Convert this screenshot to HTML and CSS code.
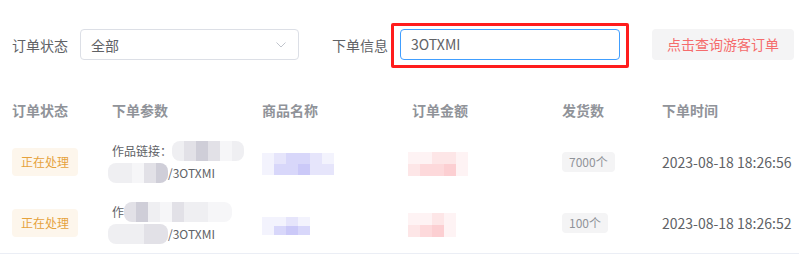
FILE: index.html
```html
<!DOCTYPE html>
<html lang="zh-CN">
<head>
    <meta charset="UTF-8">
    <meta name="viewport" content="width=device-width, initial-scale=1.0">
    <title>游客订单查询</title>
    <link rel="stylesheet" href="styles.css">
</head>
<body>
    <div class="searchBar">
        <span class="formLabel">订单状态</span>
        <div class="selectBox">
            <span>全部</span>
            <svg class="chevron" width="10" height="6" viewBox="0 0 10 6"><path d="M0.5 0.5 L5 5 L9.5 0.5" fill="none" stroke="#c0c4cc" stroke-width="1"/></svg>
        </div>
        <span class="formLabel infoLabel">下单信息</span>
        <div class="inputWrap">
            <div class="textInput">3OTXMI</div>
            <div class="markBox"></div>
        </div>
        <div class="queryButton">点击查询游客订单</div>
    </div>

    <div class="orderTable">
        <div class="tableRow headRow">
            <div class="cell c1">订单状态</div>
            <div class="cell c2">下单参数</div>
            <div class="cell c3">商品名称</div>
            <div class="cell c4">订单金额</div>
            <div class="cell c5">发货数</div>
            <div class="cell c6">下单时间</div>
        </div>

        <div class="tableRow">
            <div class="cell c1"><span class="statusTag">正在处理</span></div>
            <div class="cell c2 params">
                <div class="paramLine">作品链接：<span class="mosaic grey"><i class="a"></i><i class="b"></i><i class="c"></i><i class="b"></i><i class="d"></i><i class="a"></i></span></div>
                <div class="paramLine"><span class="mosaic grey lead"><i class="a"></i><i class="a"></i><i class="d"></i><i class="b"></i><i class="c"></i></span>/3OTXMI</div>
            </div>
            <div class="cell c3">
                <span class="mosaic2 violet">
                    <i class="d"></i><i class="a"></i><i class="b"></i><i class="b"></i><i class="a"></i><i class="d"></i>
                    <i class="d"></i><i class="b"></i><i class="b"></i><i class="c"></i><i class="a"></i><i class="a"></i>
                </span>
            </div>
            <div class="cell c4">
                <span class="mosaic2 pink">
                    <i class="d"></i><i class="d"></i><i class="a"></i><i class="a"></i><i class="d"></i>
                    <i class="a"></i><i class="b"></i><i class="b"></i><i class="c"></i><i class="d"></i>
                </span>
            </div>
            <div class="cell c5"><span class="countTag">7000个</span></div>
            <div class="cell c6 timeText">2023-08-18 18:26:56</div>
        </div>

        <div class="tableRow">
            <div class="cell c1"><span class="statusTag">正在处理</span></div>
            <div class="cell c2 params">
                <div class="paramLine">作<span class="mosaic grey"><i class="b"></i><i class="c"></i><i class="a"></i><i class="d"></i><i class="b"></i><i class="a"></i><i class="a"></i><i class="d"></i><i class="d"></i></span></div>
                <div class="paramLine"><span class="mosaic grey lead"><i class="a"></i><i class="a"></i><i class="a"></i><i class="b"></i><i class="b"></i></span>/3OTXMI</div>
            </div>
            <div class="cell c3">
                <span class="mosaic2 violet small">
                    <i class="d"></i><i class="d"></i><i class="a"></i><i class="d"></i>
                    <i class="d"></i><i class="b"></i><i class="c"></i><i class="b"></i>
                </span>
            </div>
            <div class="cell c4">
                <span class="mosaic2 pink small">
                    <i class="d"></i><i class="d"></i><i class="a"></i><i class="d"></i>
                    <i class="a"></i><i class="b"></i><i class="c"></i><i class="d"></i>
                </span>
            </div>
            <div class="cell c5"><span class="countTag">100个</span></div>
            <div class="cell c6 timeText">2023-08-18 18:26:52</div>
        </div>
    </div>
</body>
</html>
```
FILE: styles.css
```css
body {
    margin: 0;
    background-color: #fff;
    font-family: 'Noto Sans CJK SC', 'Microsoft YaHei', sans-serif;
    font-size: 14px;
    color: #606266;
}

.searchBar {
    display: flex;
    align-items: center;
    padding: 29px 0 0 12px;
    height: 31px;
}

.formLabel {
    color: #606266;
    margin-right: 12px;
}

.infoLabel {
    margin-left: 33px;
    margin-right: 12px;
}

.selectBox {
    box-sizing: border-box;
    width: 219px;
    height: 31px;
    border: 1px solid #dcdfe6;
    border-radius: 4px;
    display: flex;
    align-items: center;
    justify-content: space-between;
    padding: 0 12px 0 10px;
}

.chevron {
    display: block;
}

.inputWrap {
    position: relative;
}

.textInput {
    box-sizing: border-box;
    width: 220px;
    height: 31px;
    border: 1px solid #409eff;
    border-radius: 4px;
    padding: 0 10px;
    line-height: 29px;
    color: #606266;
}

.markBox {
    position: absolute;
    left: -9px;
    top: -6px;
    width: 232px;
    height: 39px;
    border: 3px solid #ff1c1c;
    border-radius: 2px;
}

.queryButton {
    margin-left: 32px;
    height: 31px;
    line-height: 31px;
    padding: 0 15px;
    background-color: #f4f4f5;
    border-radius: 4px;
    color: #f56c6c;
}

.orderTable {
    margin-top: 29px;
    border-bottom: 1px solid #ebeef5;
}

.tableRow {
    display: flex;
    align-items: center;
    height: 61px;
}

.headRow {
    height: 42px;
    color: #909399;
    font-weight: bold;
}

.cell {
    box-sizing: border-box;
    padding-left: 12px;
}

.c1 { width: 100px; }
.c2 { width: 150px; }
.c3 { width: 150px; }
.c4 { width: 150px; }
.c5 { width: 100px; }
.c6 { flex: 1; }

.statusTag {
    display: inline-block;
    height: 28px;
    line-height: 28px;
    padding: 0 9px;
    font-size: 12px;
    color: #e6a23c;
    background-color: #fdf6ec;
    border-radius: 4px;
}

.countTag {
    display: inline-block;
    height: 20px;
    line-height: 20px;
    padding: 0 7px;
    font-size: 12px;
    color: #909399;
    background-color: #f4f4f5;
    border-radius: 4px;
}

.params {
    font-size: 12px;
}

.paramLine {
    display: flex;
    align-items: center;
    height: 22px;
    white-space: nowrap;
}

.timeText {
    color: #606266;
}

.mosaic {
    display: inline-flex;
    height: 20px;
    border-radius: 8px;
    overflow: hidden;
}

.mosaic.lead {
    margin-left: -4px;
}

.mosaic i {
    width: 12px;
    height: 20px;
}

.mosaic2 {
    display: inline-grid;
    grid-template-columns: repeat(6, 12px);
    grid-auto-rows: 11px;
}

.mosaic2.pink {
    grid-template-columns: repeat(5, 12px);
    grid-auto-rows: 12px;
    margin-left: -4px;
}

.mosaic2.small {
    grid-template-columns: repeat(4, 12px);
    grid-auto-rows: 9px;
}

.mosaic2.pink.small {
    grid-auto-rows: 12px;
}

.mosaic2 i {
    display: block;
}

.grey .a { background-color: #efeff2; }
.grey .b { background-color: #e2e1e7; }
.grey .c { background-color: #cfced8; }
.grey .d { background-color: #f6f6f8; }

.violet .a { background-color: #e6e5fb; }
.violet .b { background-color: #d8d7fa; }
.violet .c { background-color: #cbc9f8; }
.violet .d { background-color: #f3f3fd; }

.pink .a { background-color: #fde6e7; }
.pink .b { background-color: #fdd9db; }
.pink .c { background-color: #fccfd2; }
.pink .d { background-color: #fef3f4; }
```
